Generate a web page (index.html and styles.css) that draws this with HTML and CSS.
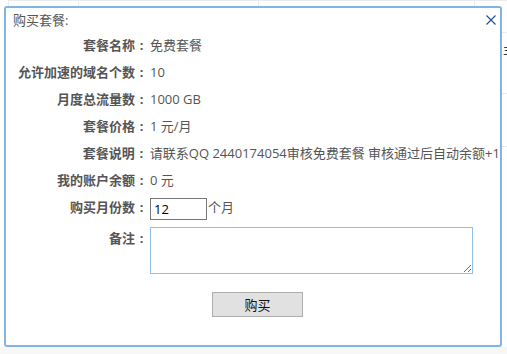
FILE: index.html
```html
<!DOCTYPE html>
<html lang="zh-CN">
<head>
  <meta charset="UTF-8">
  <title>购买套餐</title>
  <link rel="stylesheet" href="styles.css">
</head>
<body>
  <div class="page">
    <table class="list">
      <tr class="head"><td class="c1"></td><td class="c2"></td><td class="c3"></td><td class="c4"></td></tr>
      <tr class="item"><td></td><td></td><td></td><td class="op">丰收</td></tr>
      <tr class="item"><td></td><td></td><td></td><td></td></tr>
    </table>
  </div>

  <div class="dialog">
    <div class="dialog-title">
      购买套餐:
      <span class="close">
        <svg width="10" height="10" viewBox="0 0 10 10"><path d="M0.5 0.5 L9.5 9.5 M9.5 0.5 L0.5 9.5" stroke="#1d4f8e" stroke-width="1.1" fill="none"/></svg>
      </span>
    </div>

    <div class="form">
      <div class="row"><label>套餐名称<span class="colon">:</span></label><span class="val">免费套餐</span></div>
      <div class="row"><label>允许加速的域名个数<span class="colon">:</span></label><span class="val">10</span></div>
      <div class="row"><label>月度总流量数<span class="colon">:</span></label><span class="val">1000 GB</span></div>
      <div class="row"><label>套餐价格<span class="colon">:</span></label><span class="val">1 元/月</span></div>
      <div class="row"><label>套餐说明<span class="colon">:</span></label><span class="val">请联系QQ 2440174054审核免费套餐 审核通过后自动余额+1</span></div>
      <div class="row"><label>我的账户余额<span class="colon">:</span></label><span class="val">0 元</span></div>
      <div class="row"><label>购买月份数<span class="colon">:</span></label><span class="val"><input class="months" type="text" value="12">个月</span></div>
      <div class="row note"><label>备注<span class="colon">:</span></label><span class="val"><textarea class="remark"></textarea></span></div>
      <div class="actions"><button class="buy">购买</button></div>
    </div>
  </div>
</body>
</html>
```

FILE: styles.css
```css
body {
  margin: 0;
  background: #f7f7f7;
  font-family: "Open Sans", "Noto Sans CJK SC", sans-serif;
  font-size: 13px;
  color: #555;
}

.page {
  background: #fff;
  height: 347px;
  overflow: hidden;
}

.list {
  border-collapse: collapse;
  margin-left: 8px;
  width: 560px;
}

.list td {
  border: 1px solid #ebebeb;
  padding: 0;
}

.list .c1 { width: 69px; }
.list .c2 { width: 179px; }
.list .c3 { width: 215px; }

.list .head td { height: 31px; }
.list .item td { height: 52px; }

.list .op {
  padding-left: 28px;
  color: #333;
  vertical-align: top;
  padding-top: 8px;
}

.dialog {
  position: absolute;
  left: 4px;
  top: 6px;
  width: 494px;
  height: 337px;
  background: #fff;
  border: 2px solid #80b3e6;
  border-radius: 3px;
}

.dialog-title {
  position: relative;
  padding: 2px 0 0 7px;
  line-height: 20px;
  height: 20px;
  color: #555;
}

.close {
  position: absolute;
  right: 4px;
  top: 7px;
  line-height: 0;
}

.form {
  padding-top: 2px;
}

.row {
  display: flex;
  align-items: center;
  height: 27px;
  line-height: 27px;
  white-space: nowrap;
}

.row label {
  width: 142px;
  text-align: right;
  font-weight: bold;
  color: #555;
}

.colon {
  display: inline-block;
  width: 13px;
  text-align: center;
}

.row .val {
  margin-left: 2px;
}

.months {
  width: 57px;
  height: 22px;
  box-sizing: border-box;
  border: 1px solid #777;
  padding: 0 3px;
  margin: 0 1px 0 0;
  font: 13px "Open Sans", "Noto Sans CJK SC", sans-serif;
  color: #000;
  vertical-align: middle;
}

.row.note {
  height: auto;
  align-items: flex-start;
  padding-top: 4px;
}

.remark {
  display: block;
  width: 323px;
  height: 47px;
  box-sizing: border-box;
  margin-top: 2px;
  border: 1px solid #8fc0ea;
}

.actions {
  padding: 18px 0 0 206px;
}

.buy {
  width: 91px;
  height: 25px;
  background: #e1e1e1;
  border: 1px solid #adadad;
  font: 13px "Open Sans", "Noto Sans CJK SC", sans-serif;
  color: #111;
  padding: 0;
}
```
